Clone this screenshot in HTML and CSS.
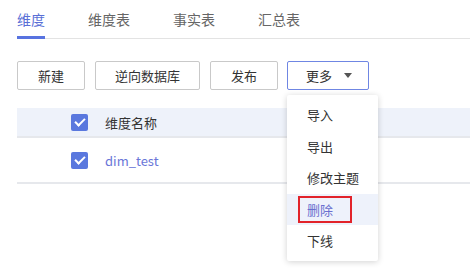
FILE: index.html
```html
<!DOCTYPE html>
<html lang="zh-CN">
<head>
    <meta charset="UTF-8">
    <title>维度</title>
    <link rel="stylesheet" href="styles.css">
</head>
<body>
    <div class="page">
        <div class="tabs">
            <span class="tab active">维度</span>
            <span class="tab">维度表</span>
            <span class="tab">事实表</span>
            <span class="tab">汇总表</span>
        </div>

        <div class="toolbar">
            <button class="btn">新建</button>
            <button class="btn">逆向数据库</button>
            <button class="btn">发布</button>
            <div class="more-wrap">
                <button class="btn more">更多 <span class="caret"></span></button>
                <!-- dropdown menu -->
                <div class="menu">
                    <div class="item">导入</div>
                    <div class="item">导出</div>
                    <div class="item">修改主题</div>
                    <div class="item current"><span class="mark">删除</span></div>
                    <div class="item">下线</div>
                </div>
            </div>
        </div>

        <div class="table">
            <div class="row head">
                <span class="check"></span>
                <span>维度名称</span>
            </div>
            <div class="row">
                <span class="check"></span>
                <span class="link">dim_test</span>
            </div>
        </div>
    </div>
</body>
</html>
```

FILE: styles.css
```css
html, body {
    height: 100%;
}
body {
    margin: 0;
    min-height: 100vh;
    font-family: "Noto Sans CJK SC", "Noto Sans", sans-serif;
    background: #fff;
    color: #333;
}
.page {
    min-height: 100%;
    padding: 0 6px 0 17px;
}
.tabs {
    display: flex;
    gap: 43px;
    border-bottom: 1px solid #e3e3e3;
}
.tab {
    font-size: 14px;
    line-height: 20px;
    padding: 9px 0 7px;
    color: #666;
    border-bottom: 3px solid transparent;
    margin-bottom: -1px;
}
.tab.active {
    color: #5a6fd6;
    border-bottom-color: #5873e0;
}
.toolbar {
    display: flex;
    gap: 10px;
    margin-top: 22px;
}
.btn {
    height: 29px;
    min-width: 68px;
    padding: 0 19px;
    font-family: inherit;
    font-size: 13px;
    color: #333;
    background: #fff;
    border: 1px solid #c9c9c9;
    border-radius: 2px;
}
.more-wrap {
    position: relative;
    margin-left: -1px;
}
.btn.more {
    width: 82px;
    padding: 0 0 0 2px;
    border-color: #6f86e3;
    display: flex;
    align-items: center;
    justify-content: center;
    gap: 12px;
}
.caret {
    width: 0;
    height: 0;
    border-left: 4px solid transparent;
    border-right: 4px solid transparent;
    border-top: 5px solid #555;
}
.menu {
    position: absolute;
    top: 34px;
    left: 0;
    width: 91px;
    padding: 4px 0;
    background: #fff;
    border-radius: 2px;
    box-shadow: 0 1px 6px rgba(0, 0, 0, 0.18);
    z-index: 2;
}
.item {
    height: 31.5px;
    line-height: 31.5px;
    padding-left: 20px;
    font-size: 13px;
    color: #333;
}
.item.current {
    background: #eef2fb;
    padding-left: 11px;
    display: flex;
    align-items: center;
}
.mark {
    line-height: 23px;
    padding: 0 17px 0 7px;
    border: 2px solid #e2232a;
    color: #6a6fcf;
}
.table {
    margin-top: 18px;
}
.row {
    display: flex;
    align-items: center;
    gap: 17px;
    padding-left: 54px;
    height: 44px;
    font-size: 13px;
    border-bottom: 2px solid #e6e8ec;
}
.row.head {
    height: 28px;
    background: #eef2fa;
    color: #333;
}
.check {
    position: relative;
    width: 17px;
    height: 17px;
    border-radius: 2px;
    background: #5a78de;
}
.check::after {
    content: "";
    position: absolute;
    left: 6px;
    top: 2.5px;
    width: 4px;
    height: 8px;
    border-right: 2px solid #fff;
    border-bottom: 2px solid #fff;
    transform: rotate(45deg);
}
.link {
    color: #6a76d8;
}
```
